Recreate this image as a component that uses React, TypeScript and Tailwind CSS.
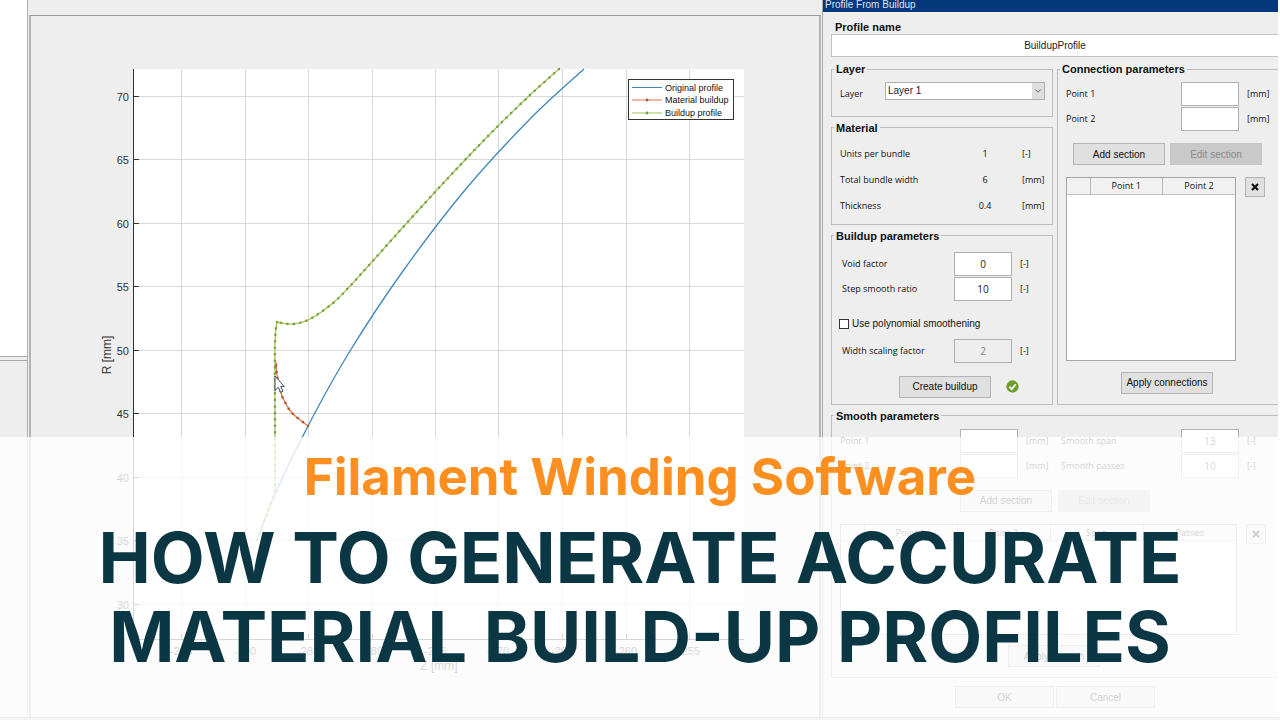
import { ReactNode } from "react";
import { ChevronDown } from "lucide-react";

const X_TICKS = [
  { x: 181, label: "-295" },
  { x: 245, label: "-290" },
  { x: 308, label: "-285" },
  { x: 372, label: "-280" },
  { x: 435, label: "-275" },
  { x: 498, label: "-270" },
  { x: 562, label: "-265" },
  { x: 626, label: "-260" },
  { x: 689, label: "-255" },
];

const Y_TICKS = [
  { y: 97, label: "70" },
  { y: 160, label: "65" },
  { y: 224, label: "60" },
  { y: 287, label: "55" },
  { y: 351, label: "50" },
  { y: 414, label: "45" },
  { y: 478, label: "40" },
  { y: 541, label: "35" },
  { y: 605, label: "30" },
];

type Point = [number, number];

const ORIGINAL: Point[] = [
  [584, 69], [530, 119], [465, 190], [403, 271], [350, 351], [308, 426], [275, 494], [257, 540],
];
const BUILDUP_TOP: Point[] = [
  [559, 69], [529, 96], [497, 127], [465, 160], [435, 192], [396, 235], [370, 264],
  [351, 285], [333, 303], [310, 319], [293, 324], [277, 322],
];
const BUILDUP_SIDE: Point[] = [[277, 322], [275, 344], [275, 420], [275, 493], [257, 540]];
const MATERIAL: Point[] = [[308, 426], [292, 413], [285, 402], [281, 393], [277, 375], [276, 362]];

// Catmull-Rom through the points, written out as cubic segments
function smooth(pts: Point[]) {
  let d = `M${pts[0][0]} ${pts[0][1]}`;
  for (let i = 0; i < pts.length - 1; i++) {
    const a = pts[i - 1] ?? pts[i];
    const b = pts[i];
    const c = pts[i + 1];
    const e = pts[i + 2] ?? c;
    d += `C${b[0] + (c[0] - a[0]) / 6} ${b[1] + (c[1] - a[1]) / 6} ${c[0] - (e[0] - b[0]) / 6} ${c[1] - (e[1] - b[1]) / 6} ${c[0]} ${c[1]}`;
  }
  return d;
}

function Series({ d, color, dot }: { d: string; color: string; dot: string }) {
  return (
    <>
      <path d={d} fill="none" stroke={color} strokeWidth="1.3" />
      <path d={d} fill="none" stroke={dot} strokeWidth="2.6" strokeLinecap="round" strokeDasharray="0 6.5" />
    </>
  );
}

function Chart() {
  return (
    <svg
      viewBox="31 16 788 700"
      className="block h-auto w-full font-['Liberation_Sans',sans-serif] text-[11px]"
      role="img"
      aria-label="Winding profiles"
    >
      <rect x="134" y="69" width="610" height="570" fill="#fff" />
      <g stroke="#d9d9d9">
        {X_TICKS.map((t) => (
          <line key={t.label} x1={t.x + 0.5} x2={t.x + 0.5} y1="69" y2="639" />
        ))}
        {Y_TICKS.map((t) => (
          <line key={t.label} x1="134" x2="744" y1={t.y - 0.5} y2={t.y - 0.5} />
        ))}
      </g>
      <g stroke="#333">
        <path d="M133.5 69V639.5H744" fill="none" />
        {X_TICKS.map((t) => (
          <line key={t.label} x1={t.x + 0.5} x2={t.x + 0.5} y1="634" y2="639" />
        ))}
        {Y_TICKS.map((t) => (
          <line key={t.label} x1="134" x2="139" y1={t.y - 0.5} y2={t.y - 0.5} />
        ))}
      </g>
      <g fill="#333">
        {X_TICKS.map((t) => (
          <text key={t.label} x={t.x} y="655" textAnchor="middle">
            {t.label}
          </text>
        ))}
        {Y_TICKS.map((t) => (
          <text key={t.label} x="129" y={t.y + 4} textAnchor="end">
            {t.label}
          </text>
        ))}
        <text x="439" y="670" textAnchor="middle" className="text-[12px]">
          Z [mm]
        </text>
        <text x="111" y="355" textAnchor="middle" transform="rotate(-90 111 355)" className="text-[12px]">
          R [mm]
        </text>
      </g>

      <path d={smooth(ORIGINAL)} fill="none" stroke="#3f86b8" strokeWidth="1.3" />
      <Series d={smooth(BUILDUP_TOP)} color="#9fc55a" dot="#7a9f45" />
      <Series d={smooth(BUILDUP_SIDE.slice(0, 4)) + "L257 540"} color="#9fc55a" dot="#7a9f45" />
      <Series d={smooth(MATERIAL)} color="#d9774f" dot="#b5532f" />

      {/* Legend */}
      <rect x="628.5" y="79.5" width="105" height="40" fill="#fff" stroke="#333" />
      <line x1="632" x2="662" y1="87.5" y2="87.5" stroke="#3f86b8" />
      <line x1="632" x2="662" y1="100" y2="100" stroke="#d9774f" />
      <circle cx="647" cy="100" r="1.4" fill="#b5532f" />
      <line x1="632" x2="662" y1="113" y2="113" stroke="#9fc55a" />
      <circle cx="647" cy="113" r="1.4" fill="#7a9f45" />
      <g fill="#111" className="text-[9px]">
        <text x="665" y="91">Original profile</text>
        <text x="665" y="103">Material buildup</text>
        <text x="665" y="116">Buildup profile</text>
      </g>

      {/* Mouse pointer */}
      <path
        d="M275 376V390.5L278.3 387.3L280.7 392.3L283 391.2L280.7 386.4H284.2Z"
        fill="#fff"
        stroke="#444a63"
        strokeWidth="1"
      />
    </svg>
  );
}

function Group({ title, open, children }: { title: string; open?: boolean; children: ReactNode }) {
  return (
    <fieldset className={`min-w-0 border border-[#bcbcbc] ${open ? "border-r-0" : ""}`}>
      <legend className="ml-[2px] h-4 px-[2px] text-[11px] leading-4 font-bold text-[#111]">{title}</legend>
      {children}
    </fieldset>
  );
}

function Button({ children, disabled, className = "w-[92px]" }: { children: ReactNode; disabled?: boolean; className?: string }) {
  return (
    <button
      type="button"
      disabled={disabled}
      className={`h-[22px] border border-[#b4b4b4] bg-[#e0e0e0] text-[10px] whitespace-nowrap text-[#111] disabled:border-[#c6c6c6] disabled:bg-[#c9c9c9] disabled:text-[#8b8b8b] ${className}`}
    >
      {children}
    </button>
  );
}

const INPUT =
  "h-6 w-[58px] border border-[#b0b0b0] bg-white text-center font-['Open_Sans',sans-serif] text-[10px] text-[#222] disabled:bg-[#eeeeee] disabled:text-[#888]";
const LABEL = "font-['Open_Sans',sans-serif] text-[9px] whitespace-nowrap text-[#111]";

function Field({ id, label, value = "", unit, disabled }: { id: string; label: string; value?: string; unit: string; disabled?: boolean }) {
  return (
    <>
      <label htmlFor={id} className={LABEL}>
        {label}
      </label>
      <input id={id} defaultValue={value} disabled={disabled} className={INPUT} />
      <span className={LABEL}>{unit}</span>
    </>
  );
}

function DeleteButton() {
  return (
    <button
      type="button"
      aria-label="Delete section"
      className="flex size-5 shrink-0 items-center justify-center border border-[#b4b4b4] bg-[#e0e0e0]"
    >
      <svg viewBox="0 0 8 8" className="size-2">
        <path d="M1 1L7 7M7 1L1 7" stroke="#111" strokeWidth="2.2" />
      </svg>
    </button>
  );
}

function SectionTable({ columns, className }: { columns: string[]; className: string }) {
  return (
    <div className={`flex-1 border border-[#a5a5a5] bg-white ${className}`}>
      <table className="w-full table-fixed border-collapse">
        <thead>
          <tr className="h-4 border-b border-[#c2c2c2] bg-[#f1f1f1]">
            <th className="w-[23px]" />
            {columns.map((c) => (
              <th key={c} className={`border-l border-[#b8b8b8] leading-[15px] font-normal ${LABEL}`}>
                {c}
              </th>
            ))}
          </tr>
        </thead>
      </table>
    </div>
  );
}

const MATERIAL_ROWS = [
  ["Units per bundle", "1", "[-]"],
  ["Total bundle width", "6", "[mm]"],
  ["Thickness", "0.4", "[mm]"],
];

function BuildupDialog() {
  return (
    <section className="flex w-[455px] shrink-0 flex-col bg-[#eeeeee]">
      <header className="h-3 bg-[#04367a] pl-[2px] whitespace-nowrap text-[#dfe7f2]">
        <h2 className="text-[10px] leading-[9px]">Profile From Buildup</h2>
      </header>

      <form className="flex flex-col pl-2">
        <label htmlFor="name" className="mt-2 pl-1 text-[11px] leading-[14px] font-bold text-[#111]">
          Profile name
        </label>
        <input
          id="name"
          defaultValue="BuildupProfile"
          className="h-[23px] border border-r-0 border-[#c2c2c2] bg-white text-center text-[10px] text-[#222]"
        />

        <div className="mt-1 flex gap-1">
          <div className="flex w-[222px] shrink-0 flex-col gap-[3px]">
            <Group title="Layer">
              <div className="flex items-start justify-between pt-[5px] pr-[7px] pb-[15px] pl-2">
                <label htmlFor="layer" className={`pt-[5px] ${LABEL}`}>
                  Layer
                </label>
                <div className="relative">
                  <select
                    id="layer"
                    className="block h-[18px] w-[160px] appearance-none border border-[#b0b0b0] bg-white pl-[2px] text-[10px] leading-4 text-[#222]"
                  >
                    <option>Layer 1</option>
                  </select>
                  <span className="pointer-events-none absolute top-px right-px flex h-4 w-3 items-center justify-center bg-[#dedede]">
                    <ChevronDown className="size-[10px] text-[#555]" />
                  </span>
                </div>
              </div>
            </Group>

            <Group title="Material">
              <dl className="py-[5px] pl-2">
                {MATERIAL_ROWS.map(([name, value, unit]) => (
                  <div key={name} className="grid h-[26px] grid-cols-[1fr_58px_30px] items-center gap-x-2">
                    <dt className={LABEL}>{name}</dt>
                    <dd className={`text-center ${LABEL}`}>{value}</dd>
                    <dd className={LABEL}>{unit}</dd>
                  </div>
                ))}
              </dl>
            </Group>

            <Group title="Buildup parameters">
              <div className="grid grid-cols-[1fr_58px_32px] items-center gap-x-2 gap-y-px pt-2 pl-[10px]">
                <Field id="void" label="Void factor" value="0" unit="[-]" />
                <Field id="ratio" label="Step smooth ratio" value="10" unit="[-]" />
              </div>
              <div className="mt-[15px] flex h-4 items-center gap-[3px] pl-[7px]">
                <input
                  id="poly"
                  type="checkbox"
                  className="size-[10px] shrink-0 appearance-none border border-[#333] bg-white checked:bg-[#333]"
                />
                <label htmlFor="poly" className="text-[10px] text-[#111]">
                  Use polynomial smoothening
                </label>
              </div>
              <div className="mt-[7px] grid grid-cols-[1fr_58px_32px] items-center gap-x-2 pl-[10px]">
                <Field id="scaling" label="Width scaling factor" value="2" unit="[-]" disabled />
              </div>
              <div className="mt-[13px] mb-[6px] flex items-center gap-[15px] pl-[67px]">
                <Button>Create buildup</Button>
                <svg viewBox="0 0 14 14" className="size-[13px]" aria-label="Done">
                  <circle cx="7" cy="7" r="6.6" fill="#6a9f2c" />
                  <path d="M3.6 7.2L6.2 9.8L10.5 4.6" fill="none" stroke="#fff" strokeWidth="1.9" />
                </svg>
              </div>
            </Group>
          </div>

          <div className="flex flex-1 flex-col">
            <Group title="Connection parameters" open>
              <div className="grid grid-cols-[1fr_58px_31px] items-center gap-x-2 gap-y-px pt-[5px] pl-2">
                <Field id="c1" label="Point 1" unit="[mm]" />
                <Field id="c2" label="Point 2" unit="[mm]" />
              </div>
              <div className="mt-3 flex gap-[5px] pl-[15px]">
                <Button>Add section</Button>
                <Button disabled>Edit section</Button>
              </div>
              <div className="mt-3 flex items-start gap-[9px] pr-[13px] pl-2">
                <SectionTable columns={["Point 1", "Point 2"]} className="h-[184px]" />
                <DeleteButton />
              </div>
              <div className="mt-2 mb-[10px] pl-[63px]">
                <Button>Apply connections</Button>
              </div>
            </Group>
          </div>
        </div>

        <div className="mt-[3px]">
          <Group title="Smooth parameters" open>
            <div className="grid grid-cols-[1fr_58px_27px_112px_58px_31px] items-center gap-x-2 gap-y-px pt-[5px] pl-2">
              <Field id="s1" label="Point 1" unit="[mm]" />
              <Field id="span" label="Smooth span" value="13" unit="[-]" />
              <Field id="s2" label="Point 2" unit="[mm]" />
              <Field id="passes" label="Smooth passes" value="10" unit="[-]" />
            </div>
            <div className="mt-3 flex gap-[6px] pl-[128px]">
              <Button>Add section</Button>
              <Button disabled>Edit section</Button>
            </div>
            <div className="mt-3 flex items-start gap-[9px] pr-[12px] pl-2">
              <SectionTable columns={["Point 1", "Point 2", "Span", "Passes"]} className="h-[111px]" />
              <DeleteButton />
            </div>
            <div className="mt-2 mb-[10px] pl-[176px]">
              <Button>Apply smooth</Button>
            </div>
          </Group>
        </div>

        <div className="mt-2 mb-2 flex gap-[2px] pl-[124px]">
          <Button className="w-[99px]">OK</Button>
          <Button className="w-[99px]">Cancel</Button>
        </div>
      </form>
    </section>
  );
}

export default function App() {
  return (
    <main className="relative flex min-h-screen flex-col overflow-hidden bg-[#eeeeee] font-['Liberation_Sans',Arial,sans-serif]">
      <div className="flex flex-1">
        <div className="flex w-7 shrink-0 flex-col gap-[3px] border-r border-[#b0b0b0]">
          <div className="flex-1 border-b border-[#a8a8a8] bg-white" />
          <div className="flex-1 border-t border-[#a8a8a8]" />
        </div>
        <div className="ml-px flex min-w-0 flex-1 flex-col pt-[15px]">
          <div className="flex-1 border-x-2 border-t border-[#b4b4b4] border-t-[#999]">
            <Chart />
          </div>
        </div>
        <div className="ml-px w-px shrink-0 bg-[#a8a8a8]" />
        <BuildupDialog />
        <div className="w-[2px] shrink-0 bg-white" />
      </div>
      <div className="h-[3px] shrink-0 border-t border-[#999] bg-[#c9c9c9]" />

      <div className="absolute inset-x-0 bottom-0 flex h-[283px] flex-col items-center bg-white/80 pt-[10px] text-center font-['Inter',sans-serif] font-bold whitespace-nowrap">
        <p className="text-[51px] leading-[60px] text-[#fc8f20]">Filament Winding Software</p>
        <h1 className="mt-[11px] text-[70px] leading-[79px] text-[#0b3745]">
          HOW TO GENERATE ACCURATE
          <br />
          MATERIAL BUILD-UP PROFILES
        </h1>
      </div>
    </main>
  );
}
